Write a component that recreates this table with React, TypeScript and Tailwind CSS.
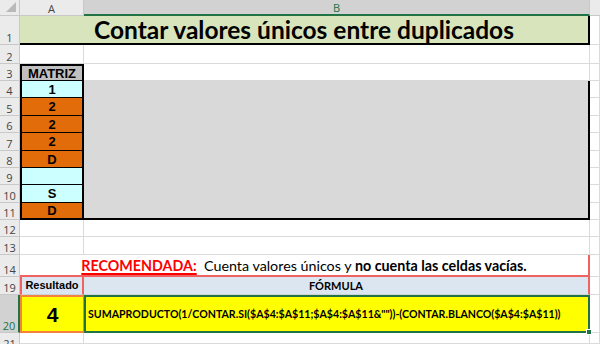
import React from "react";

const hdr = "bg-[#ebebeb] border-r border-b border-[#c8c8c8] text-[11px] text-[#444] flex items-end justify-center pb-[1px] leading-none overflow-hidden";
const grid = "border-r border-b border-[#dadada] bg-white";
const cellFont = { fontFamily: '"Liberation Sans", Arial, sans-serif' };
const cal = { fontFamily: 'Lato, "Open Sans", sans-serif' };
const hf = { fontFamily: '"Open Sans", "Noto Sans", sans-serif' };

function RowHdr({ n, sel, top }: { n: string; sel?: boolean; top?: boolean }) {
  if (sel)
    return (
      <div style={hf} className="bg-[#d2d2d2] border-r-2 border-b border-r-[#217346] border-b-[#c8c8c8] text-[11px] text-[#217346] flex items-end justify-center pb-[1px] leading-none">
        {n}
      </div>
    );
  if (top)
    return (
      <div style={hf} className="bg-[#ebebeb] border-r border-[#c8c8c8] text-[11px] text-[#444] flex items-start justify-center pt-[5px] leading-none overflow-hidden">
        {n}
      </div>
    );
  return (
    <div style={hf} className={hdr}>
      {n}
    </div>
  );
}

function ACell({ v, orange, last }: { v: string; orange?: boolean; last?: boolean }) {
  return (
    <div
      style={cellFont}
      className={`${orange ? "bg-[#e26b0a]" : "bg-[#ccffff]"} border-l-2 border-r-2 ${last ? "border-b-2" : "border-b"} border-black flex items-center justify-center text-[13px] font-bold text-black leading-none`}
    >
      {v}
    </div>
  );
}

export default function App() {
  const aVals: [string, boolean][] = [
    ["1", false],
    ["2", true],
    ["2", true],
    ["2", true],
    ["D", true],
    ["", false],
    ["S", false],
    ["D", true],
  ];
  return (
    <div className="w-[600px] h-[344px] overflow-hidden bg-white grid grid-cols-[20px_64px_506px_10px] grid-rows-[16px_29px_19px_17px_17px_18px_17px_18px_17px_17px_18px_17px_17px_18px_22px_18px_38px_11px]">
      {/* header row */}
      <div className="bg-[#ebebeb] border-r border-b border-[#c8c8c8] relative">
        <svg width="12" height="12" className="absolute right-[2px] bottom-[2px]">
          <polygon points="11,1 11,11 1,11" fill="#b9b9b9" />
        </svg>
      </div>
      <div style={hf} className={hdr + " items-center pb-0"}>A</div>
      <div style={hf} className="bg-[#d2d2d2] border-r border-r-[#c8c8c8] border-b-2 border-b-[#217346] text-[11px] text-[#217346] flex items-center justify-center leading-none">
        B
      </div>
      <div className="bg-[#ebebeb] border-b border-[#c8c8c8]" />

      {/* row 1 */}
      <RowHdr n="1" />
      <div style={cal} className="col-span-2 bg-[#d8e4bc] border-r-2 border-b-2 border-black flex items-center justify-center text-[24.5px] font-bold text-black leading-none pt-[1px] whitespace-nowrap">
        Contar valores únicos entre duplicados
      </div>
      <div className={grid} />

      {/* row 2 */}
      <RowHdr n="2" />
      <div className={grid} />
      <div className={grid} />
      <div className={grid} />

      {/* row 3 */}
      <RowHdr n="3" />
      <div style={cellFont} className="bg-[#c0c0c0] border-2 border-b border-black flex items-center justify-center text-[13px] font-bold text-black leading-none">
        MATRIZ
      </div>
      <div className={grid} />
      <div className={grid} />

      {/* rows 4-11 */}
      {aVals.map(([v, o], i) => (
        <React.Fragment key={i}>
          <RowHdr n={String(i + 4)} />
          <ACell v={v} orange={o} last={i === 7} />
          {i === 0 && <div className="row-span-8 bg-[#d9d9d9] border-r-2 border-b-2 border-black" />}
          <div className={grid} />
        </React.Fragment>
      ))}

      {/* row 12, 13 */}
      <RowHdr n="12" />
      <div className={grid} />
      <div className={grid} />
      <div className={grid} />
      <RowHdr n="13" />
      <div className={grid} />
      <div className={grid} />
      <div className={grid} />

      {/* row 14 */}
      <RowHdr n="14" />
      <div style={cal} className="col-span-2 bg-white border-r-2 border-b-2 border-[#f06262] flex items-end justify-center pb-[2px] text-[14.3px] text-black leading-none whitespace-nowrap">
        <span className="font-bold text-[#ff0000] underline decoration-[1.5px] underline-offset-[2px]">RECOMENDADA:</span>
        <span>&nbsp; Cuenta valores únicos y&nbsp;</span>
        <span className="font-bold">no cuenta las celdas vacías.</span>
      </div>
      <div className={grid} />

      {/* row 19 */}
      <RowHdr n="19" />
      <div style={cellFont} className="bg-[#dce6f1] border-l-2 border-r-2 border-[#f06262] border-b border-b-[#c9d3de] flex items-center justify-center text-[11px] font-bold text-black leading-none">
        Resultado
      </div>
      <div style={cal} className="bg-[#dce6f1] border-r-2 border-[#f06262] border-b border-b-[#c9d3de] flex items-center justify-center text-[11px] font-bold text-black leading-none">
        FÓRMULA
      </div>
      <div className={grid} />

      {/* row 20 */}
      <RowHdr n="20" sel />
      <div style={cellFont} className="bg-[#ffff00] border-2 border-r border-[#f5823a] flex items-center justify-center text-[21px] font-bold text-black leading-none">
        4
      </div>
      <div style={cal} className="relative bg-[#ffff00] border-2 border-[#217346] flex items-center pl-[2px] text-[10.6px] font-bold text-black leading-none whitespace-nowrap">
        SUMAPRODUCTO(1/CONTAR.SI($A$4:$A$11;$A$4:$A$11&amp;""))-(CONTAR.BLANCO($A$4:$A$11))
        <div className="absolute right-[-4px] bottom-[-4px] w-[6px] h-[6px] bg-[#217346] border border-white" />
      </div>
      <div className={grid} />

      {/* row 21 */}
      <RowHdr n="21" top />
      <div className={grid} />
      <div className={grid} />
      <div className={grid} />
    </div>
  );
}
